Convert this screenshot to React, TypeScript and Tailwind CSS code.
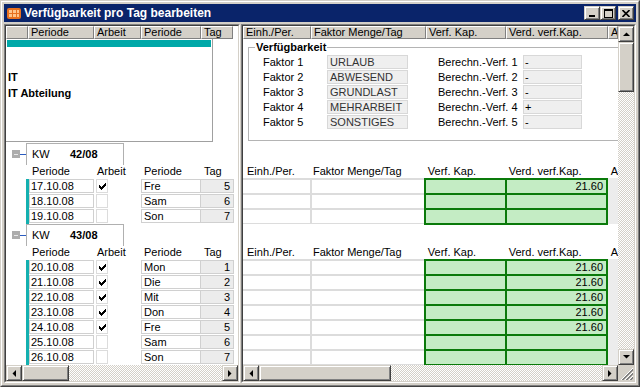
import React from "react";

const raised =
  "bg-[#d4d0c8] border border-t-[#d4d0c8] border-l-[#d4d0c8] border-b-[#404040] border-r-[#404040] shadow-[inset_1px_1px_0_#ffffff,inset_-1px_-1px_0_#808080]";
const checker =
  "bg-[image:repeating-conic-gradient(#d4d0c8_0%_25%,#ffffff_0%_50%)] bg-[length:2px_2px]";
const hcell =
  "h-[13px] shrink-0 overflow-hidden whitespace-nowrap border border-t-white border-l-white border-b-[#808080] border-r-[#808080] bg-[#d4d0c8] pl-[2px] leading-[11px]";

type Row = { date: string; work: boolean; day: string; tag: number; cap: string };

const groups: { kw: string; h: string; rows: Row[] }[] = [
  {
    kw: "42/08",
    h: "h-[46px]",
    rows: [
      { date: "17.10.08", work: true, day: "Fre", tag: 5, cap: "21.60" },
      { date: "18.10.08", work: false, day: "Sam", tag: 6, cap: "" },
      { date: "19.10.08", work: false, day: "Son", tag: 7, cap: "" },
    ],
  },
  {
    kw: "43/08",
    h: "h-[106px]",
    rows: [
      { date: "20.10.08", work: true, day: "Mon", tag: 1, cap: "21.60" },
      { date: "21.10.08", work: true, day: "Die", tag: 2, cap: "21.60" },
      { date: "22.10.08", work: true, day: "Mit", tag: 3, cap: "21.60" },
      { date: "23.10.08", work: true, day: "Don", tag: 4, cap: "21.60" },
      { date: "24.10.08", work: true, day: "Fre", tag: 5, cap: "21.60" },
      { date: "25.10.08", work: false, day: "Sam", tag: 6, cap: "" },
      { date: "26.10.08", work: false, day: "Son", tag: 7, cap: "" },
    ],
  },
];

const faktoren = [
  { name: "URLAUB", calc: "-" },
  { name: "ABWESEND", calc: "-" },
  { name: "GRUNDLAST", calc: "-" },
  { name: "MEHRARBEIT", calc: "+" },
  { name: "SONSTIGES", calc: "-" },
];

const checkPixels = ["......#", ".....##", "#...###", "##.###.", "#####..", ".###...", "..#...."];

const Check = () => (
  <svg width="7" height="7" viewBox="0 0 7 7" shapeRendering="crispEdges">
    {checkPixels.map((line, y) =>
      line.split("").map((c, x) => (c === "#" ? <rect key={`${x}-${y}`} x={x} y={y} width="1" height="1" fill="#000" /> : null))
    )}
  </svg>
);

const Arrow = ({ dir }: { dir: "up" | "down" | "left" | "right" }) => {
  if (dir === "up" || dir === "down") {
    const pts = dir === "up" ? "0,4 7,4 3.5,0.5" : "0,0 7,0 3.5,3.5";
    return (
      <svg width="7" height="4" viewBox="0 0 7 4">
        <polygon points={pts} fill="#000" />
      </svg>
    );
  }
  const pts = dir === "left" ? "4,0 4,7 0.5,3.5" : "0,0 0,7 3.5,3.5";
  return (
    <svg width="4" height="7" viewBox="0 0 4 7">
      <polygon points={pts} fill="#000" />
    </svg>
  );
};

const ScrollBtn = ({ dir }: { dir: "up" | "down" | "left" | "right" }) => (
  <div className={`${raised} flex h-[16px] w-[16px] shrink-0 items-center justify-center`}>
    <Arrow dir={dir} />
  </div>
);

const TitleIcon = () => (
  <svg width="16" height="16" viewBox="0 0 16 16">
    <rect x="1" y="3" width="14" height="11" rx="2" fill="#e8701e" />
    <rect x="3" y="5" width="3" height="3" fill="#ffc48a" />
    <rect x="7" y="5" width="3" height="3" fill="#ffc48a" />
    <rect x="11" y="5" width="2" height="3" fill="#ffc48a" />
    <rect x="3" y="9" width="3" height="3" fill="#ffc48a" />
    <rect x="7" y="9" width="3" height="3" fill="#ffc48a" />
    <rect x="11" y="9" width="2" height="3" fill="#ffc48a" />
  </svg>
);

const LeftGroup = ({ kw, h, rows }: { kw: string; h: string; rows: Row[] }) => (
  <div>
    <div className="flex h-[22px]">
      <div className="flex w-[20px] items-center pl-[6px]">
        <div className="flex h-[8px] w-[8px] items-center justify-center bg-[#acacac]">
          <div className="h-px w-[4px] bg-[#e8e8e8]" />
        </div>
        <div className="h-px w-[6px] bg-[#2a5cc0]" />
      </div>
      <div className="flex w-[98px] items-center border-x border-t border-[#b0b0b0] pl-[5px]">
        <span className="w-[38px]">KW</span>
        <span className="font-bold">{kw}</span>
      </div>
    </div>
    <div className="flex h-[13px] items-center whitespace-nowrap">
      <span className="w-[26px]" />
      <span className="w-[65px]">Periode</span>
      <span className="w-[47px]">Arbeit</span>
      <span className="w-[60px]">Periode</span>
      <span>Tag</span>
    </div>
    <div className={`flex pt-[1px] ${h}`}>
      <div className="ml-[20px] w-[3px] bg-[#14b0b0]" />
      <div className="flex flex-col">
        {rows.map((r) => (
          <div key={r.date} className="flex h-[15px]">
            <div className="h-[14px] w-[65px] border border-[#d0d0d0] pl-[1px] leading-[12px]">{r.date}</div>
            <div className="ml-[2px] flex h-[14px] w-[12px] items-center justify-center border border-[#dcdcdc]">
              {r.work && <Check />}
            </div>
            <div className="ml-[33px] h-[14px] w-[60px] border border-[#d0d0d0] pl-[2px] leading-[12px]">{r.day}</div>
            <div className="h-[14px] w-[33px] border border-l-0 border-[#d0d0d0] bg-[#ececec] pr-[3px] text-right leading-[12px]">
              {r.tag}
            </div>
          </div>
        ))}
      </div>
    </div>
  </div>
);

const RightGroup = ({ h, rows }: { h: string; rows: Row[] }) => (
  <div>
    <div className="h-[22px]" />
    <div className="flex h-[13px] items-center whitespace-nowrap pl-[4px]">
      <span className="w-[66px]">Einh./Per.</span>
      <span className="w-[115px]">Faktor Menge/Tag</span>
      <span className="w-[81px]">Verf. Kap.</span>
      <span className="w-[102px]">Verd. verf.Kap.</span>
      <span>A</span>
    </div>
    <div className={`flex items-start ${h}`}>
      <div className="grid w-[181px] grid-cols-[67px_112px] gap-[2px] bg-[#dcdcdc] pt-[2px] pb-[1px]">
        {rows.map((r) => (
          <React.Fragment key={r.date}>
            <div className="h-[13px] bg-white" />
            <div className="h-[13px] bg-white" />
          </React.Fragment>
        ))}
      </div>
      <div className="grid w-[184px] grid-cols-[79px_99px] gap-[2px] bg-[#0a7a0a] p-[2px]">
        {rows.map((r) => (
          <React.Fragment key={r.date}>
            <div className="h-[13px] bg-[#c4ecc4]" />
            <div className="h-[13px] bg-[#c4ecc4] pr-[3px] text-right leading-[13px]">{r.cap}</div>
          </React.Fragment>
        ))}
      </div>
      <div className="w-[10px] self-stretch bg-[#ececec]" />
    </div>
  </div>
);

export default function App() {
  return (
    <div className="h-[387px] w-[640px] border border-t-[#d4d0c8] border-l-[#d4d0c8] border-b-[#404040] border-r-[#404040] bg-[#d4d0c8] font-['Liberation_Sans',Arial,sans-serif] text-[11px] leading-[13px] text-black">
      <div className="flex h-full flex-col border border-t-white border-l-white border-b-[#808080] border-r-[#808080] p-[2px]">
        {/* title bar */}
        <div className="flex h-[18px] shrink-0 items-center bg-[#0a246a] px-[2px]">
          <TitleIcon />
          <span className="ml-[2px] text-[12px] font-bold text-white">Verfügbarkeit pro Tag bearbeiten</span>
          <div className="ml-auto flex items-center">
            <div className={`${raised} flex h-[14px] w-[16px] items-center justify-center`}>
              <svg width="8" height="7" viewBox="0 0 8 7">
                <rect x="1" y="5" width="6" height="2" fill="#000" />
              </svg>
            </div>
            <div className={`${raised} flex h-[14px] w-[16px] items-center justify-center`}>
              <svg width="9" height="9" viewBox="0 0 9 9" shapeRendering="crispEdges">
                <rect x="0.5" y="0.5" width="8" height="8" fill="none" stroke="#000" />
                <rect x="0" y="1" width="9" height="1" fill="#000" />
              </svg>
            </div>
            <div className={`${raised} ml-[2px] flex h-[14px] w-[16px] items-center justify-center`}>
              <svg width="8" height="7" viewBox="0 0 8 7">
                <path d="M0.5 0 L7.5 7 M7.5 0 L0.5 7" stroke="#000" strokeWidth="1.6" />
              </svg>
            </div>
          </div>
        </div>

        {/* body */}
        <div className="mt-[2px] flex h-[359px]">
          {/* left pane */}
          <div className="h-full w-[236px] border border-t-[#808080] border-l-[#808080] border-b-white border-r-white">
            <div className="flex h-full flex-col border border-t-[#404040] border-l-[#404040] border-b-[#d4d0c8] border-r-[#d4d0c8] bg-white">
              <div className="flex h-[13px] shrink-0">
                <div className={`${hcell} w-[22px]`} />
                <div className={`${hcell} w-[66px]`}>Periode</div>
                <div className={`${hcell} w-[47px]`}>Arbeit</div>
                <div className={`${hcell} w-[60px]`}>Periode</div>
                <div className={`${hcell} w-[32px]`}>Tag</div>
              </div>
              <div className="min-h-0 flex-1 overflow-hidden">
                <div className="h-[104px]">
                  <div className="h-[103px] w-[207px] border-b border-r border-[#a0a0a0] pt-[1px] pl-[1px]">
                    <div className="h-[7px] w-[204px] bg-[#00a8a8]" />
                    <div className="mt-[22px] pl-[1px] font-bold leading-[16px]">
                      <div>IT</div>
                      <div>IT Abteilung</div>
                    </div>
                  </div>
                </div>
                {groups.map((g) => (
                  <LeftGroup key={g.kw} {...g} />
                ))}
              </div>
              <div className="flex h-[16px] shrink-0">
                <ScrollBtn dir="left" />
                <div className={`${raised} h-[16px] w-[47px] shrink-0`} />
                <div className={`flex-1 ${checker}`} />
                <ScrollBtn dir="right" />
              </div>
            </div>
          </div>

          {/* right pane */}
          <div className="ml-[1px] h-full flex-1 border border-t-[#808080] border-l-[#808080] border-b-white border-r-white">
            <div className="flex h-full flex-col border border-t-[#404040] border-l-[#404040] border-b-[#d4d0c8] border-r-[#d4d0c8]">
              <div className="flex min-h-0 flex-1">
                <div className="flex w-[375px] flex-col overflow-hidden bg-white">
                  <div className="flex h-[13px] shrink-0">
                    <div className={`${hcell} w-[68px]`}>Einh./Per.</div>
                    <div className={`${hcell} w-[115px]`}>Faktor Menge/Tag</div>
                    <div className={`${hcell} w-[80px]`}>Verf. Kap.</div>
                    <div className={`${hcell} w-[102px]`}>Verd. verf.Kap.</div>
                    <div className={`${hcell} w-[10px]`}>A</div>
                  </div>
                  <div className="min-h-0 flex-1 overflow-hidden">
                    <div className="h-[104px] w-[375px] pl-[5px] pt-[8px]">
                      <div className="relative h-[94px] w-[380px] border border-[#b4b4b4]">
                        <span className="absolute left-[6px] top-[-8px] bg-white px-[1px] font-bold leading-[14px]">
                          Verfügbarkeit
                        </span>
                        <div className="pl-[14px] pt-[7px]">
                          {faktoren.map((f, i) => (
                            <div key={f.name} className="flex h-[15px] items-start whitespace-nowrap">
                              <span className="w-[64px] leading-[14px]">Faktor {i + 1}</span>
                              <div className="h-[14px] w-[81px] border border-[#d8d8d8] bg-[#efefef] pl-[2px] leading-[12px] text-[#333333]">
                                {f.name}
                              </div>
                              <span className="ml-[30px] w-[85px] leading-[14px]">Berechn.-Verf. {i + 1}</span>
                              <div className="h-[14px] w-[59px] border border-[#d8d8d8] bg-[#efefef] pl-[1px] leading-[12px]">
                                {f.calc}
                              </div>
                            </div>
                          ))}
                        </div>
                      </div>
                    </div>
                    {groups.map((g) => (
                      <RightGroup key={g.kw} h={g.h} rows={g.rows} />
                    ))}
                  </div>
                </div>
                <div className="flex w-[16px] flex-col">
                  <ScrollBtn dir="up" />
                  <div className={`${raised} h-[50px] w-[16px] shrink-0`} />
                  <div className={`flex-1 ${checker}`} />
                  <ScrollBtn dir="down" />
                </div>
              </div>
              <div className="flex h-[16px] shrink-0">
                <div className="flex w-[375px]">
                  <ScrollBtn dir="left" />
                  <div className={`${raised} h-[16px] w-[132px] shrink-0`} />
                  <div className={`flex-1 ${checker}`} />
                  <ScrollBtn dir="right" />
                </div>
                <div className="h-[16px] w-[16px] bg-[#d4d0c8]">
                  <svg width="16" height="16" viewBox="0 0 16 16">
                    <path d="M15 3 L3 15 M15 7 L7 15 M15 11 L11 15" stroke="#ffffff" strokeWidth="1" />
                    <path d="M15 4 L4 15 M15 5 L5 15 M15 8 L8 15 M15 9 L9 15 M15 12 L12 15 M15 13 L13 15" stroke="#808080" strokeWidth="1" />
                  </svg>
                </div>
              </div>
            </div>
          </div>
        </div>
      </div>
    </div>
  );
}
